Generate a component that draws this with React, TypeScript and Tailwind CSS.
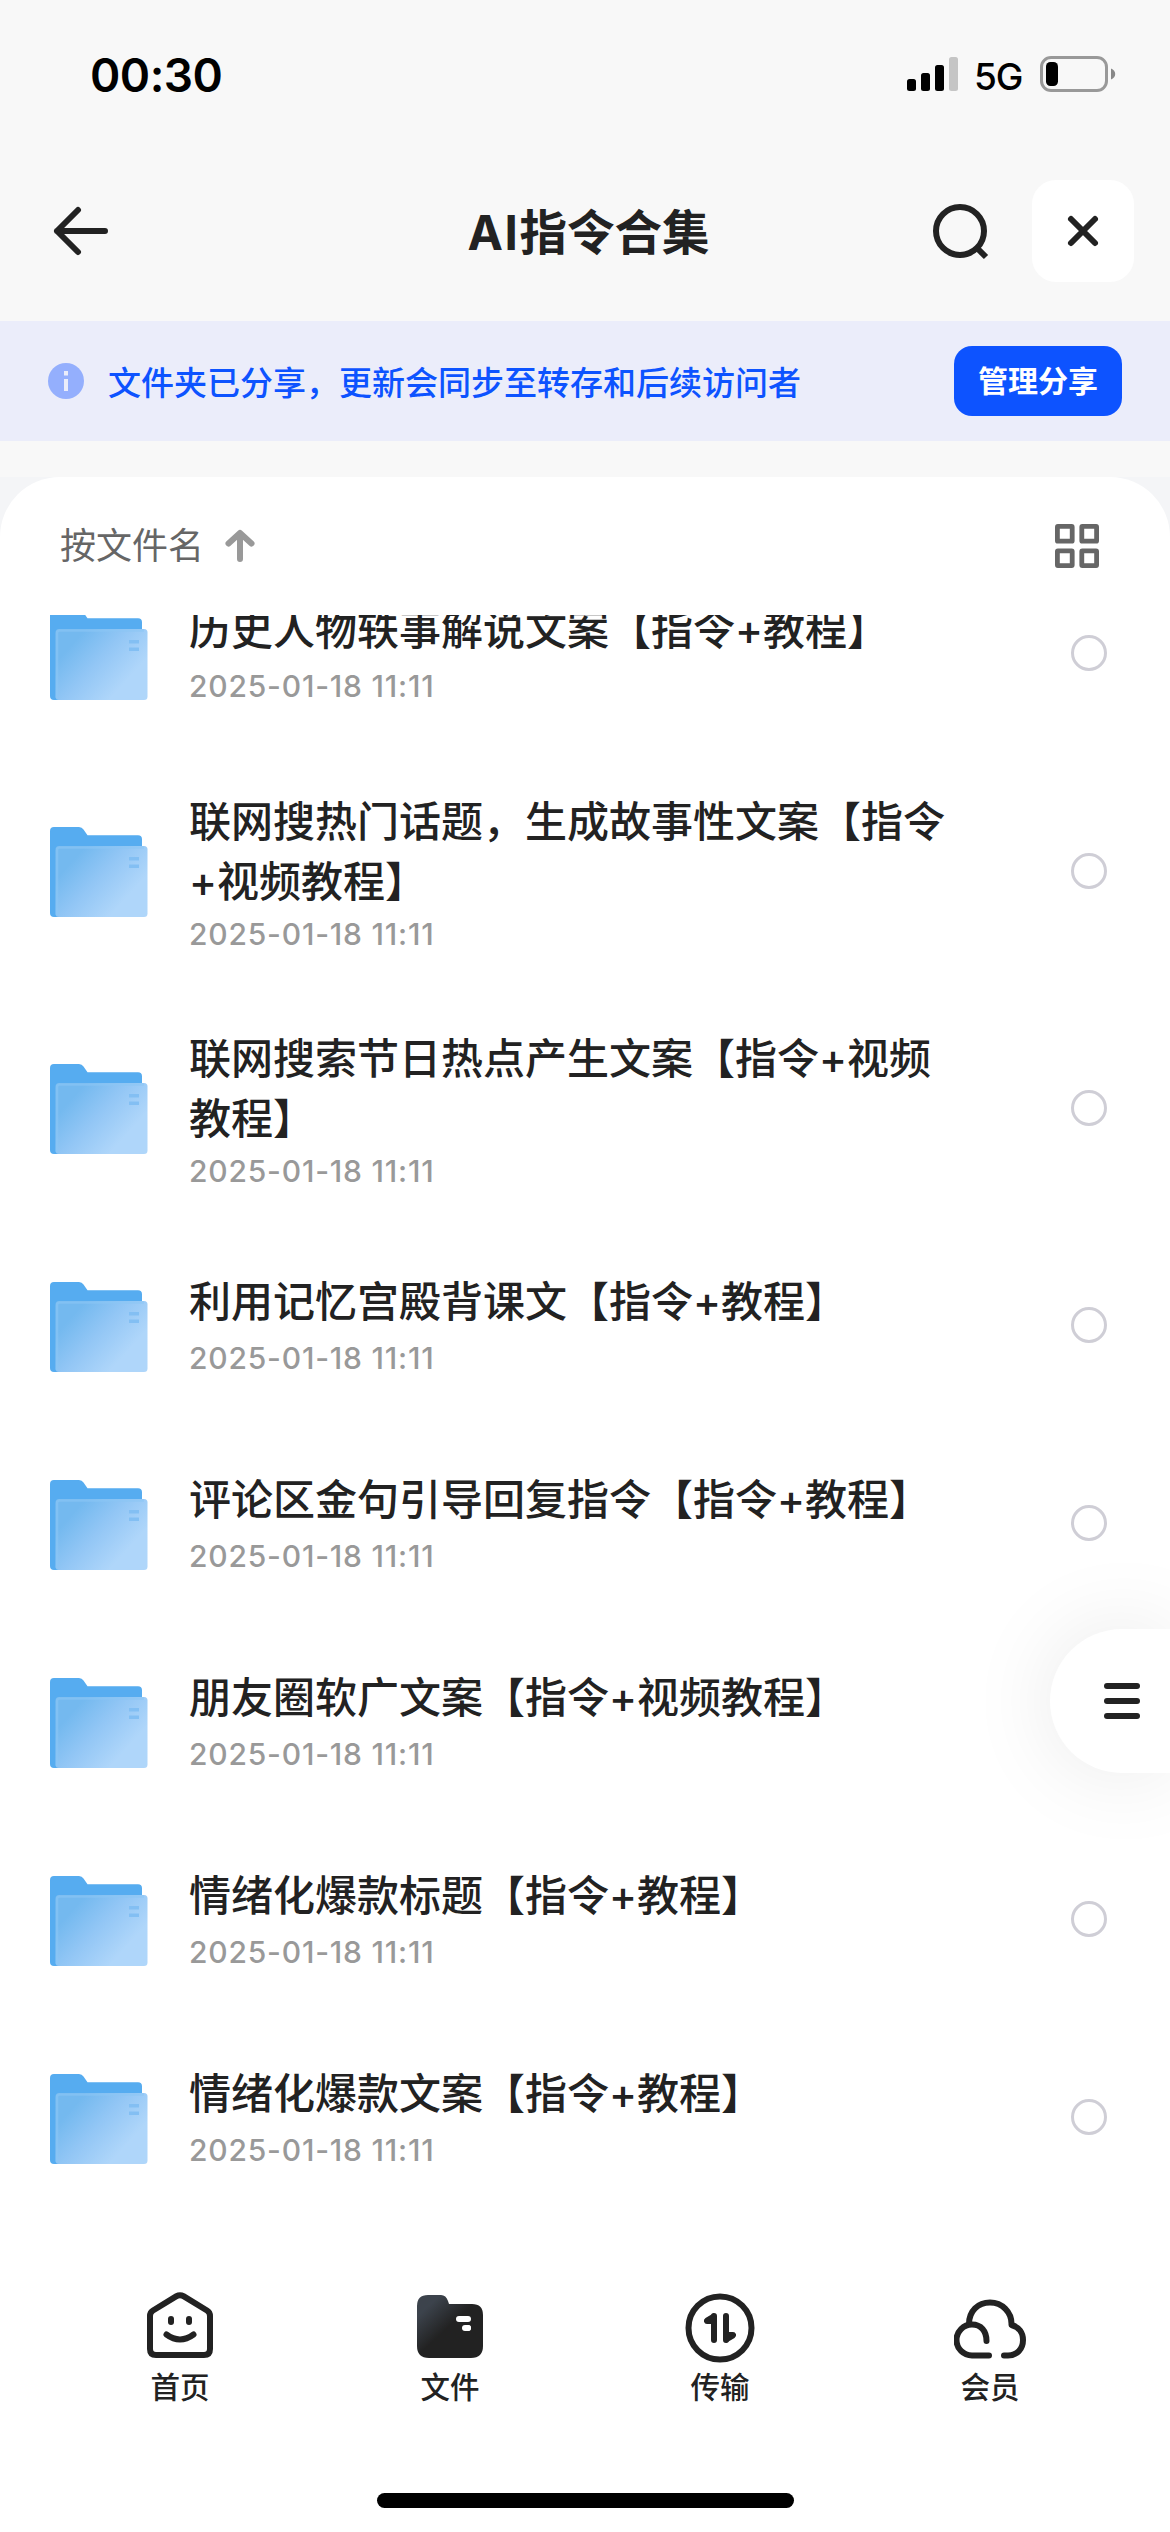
import type { ReactNode } from "react";

type FileItem = {
    name: string;
    date: string;
    long?: boolean;
};

const files: FileItem[] = [
    { name: "历史人物轶事解说文案【指令+教程】", date: "2025-01-18 11:11" },
    { name: "联网搜热门话题，生成故事性文案【指令+视频教程】", date: "2025-01-18 11:11", long: true },
    { name: "联网搜索节日热点产生文案【指令+视频教程】", date: "2025-01-18 11:11", long: true },
    { name: "利用记忆宫殿背课文【指令+教程】", date: "2025-01-18 11:11" },
    { name: "评论区金句引导回复指令【指令+教程】", date: "2025-01-18 11:11" },
    { name: "朋友圈软广文案【指令+视频教程】", date: "2025-01-18 11:11" },
    { name: "情绪化爆款标题【指令+教程】", date: "2025-01-18 11:11" },
    { name: "情绪化爆款文案【指令+教程】", date: "2025-01-18 11:11" },
];

export default function App() {
    return (
        <div
            lang="zh-CN"
            className="relative w-[1170px] h-[2532px] flex flex-col overflow-hidden bg-[#f8f8f8] text-[#222] font-['Inter','Noto_Sans_CJK_SC',sans-serif]"
        >
            <StatusBar />
            <Header />
            <ShareBanner />

            {/* File list card */}
            <main className="mt-9 flex-1 min-h-0 bg-[#f4f5f7]">
                <div className="h-full flex flex-col rounded-t-[60px] bg-white">
                    <div className="h-[138px] shrink-0 flex items-center justify-between pl-[60px] pr-[71px]">
                        <button className="flex items-center gap-[21px] text-[36px] text-[#666]">
                            <span>按文件名</span>
                            <SortIcon />
                        </button>
                        <button aria-label="网格视图">
                            <GridIcon />
                        </button>
                    </div>
                    <div className="flex-1 min-h-0 overflow-hidden">
                        <ul className="-mt-[61px]">
                            {files.map((file) => (
                                <FileRow key={file.name} file={file} />
                            ))}
                        </ul>
                    </div>
                    <TabBar />
                </div>
            </main>

            {/* Floating menu */}
            <button
                aria-label="菜单"
                className="absolute right-0 top-[1629px] w-[120px] h-[144px] pl-[54px] flex flex-col justify-center gap-[9px] rounded-l-[72px] bg-white shadow-[0_0_90px_rgba(0,0,0,0.09)]"
            >
                <span className="w-9 h-1.5 rounded-full bg-[#222]" />
                <span className="w-9 h-1.5 rounded-full bg-[#222]" />
                <span className="w-9 h-1.5 rounded-full bg-[#222]" />
            </button>
        </div>
    );
}

function StatusBar() {
    return (
        <div className="h-[148px] shrink-0 flex items-center justify-between pl-[90px] pr-[54px] text-black">
            <span className="pt-0.5 text-[46px] font-semibold leading-none tracking-[-0.5px]">00:30</span>
            <div className="flex items-center">
                <svg width="52" height="36" viewBox="0 0 52 36">
                    <rect x="0" y="23" width="9" height="12" rx="2.5" />
                    <rect x="14" y="17" width="9" height="18" rx="2.5" />
                    <rect x="28" y="9" width="9" height="26" rx="2.5" />
                    <rect x="42" y="1" width="9" height="34" rx="2.5" fill="#c5c5c5" />
                </svg>
                <span className="ml-[15px] mt-1 w-[50px] text-[37px] font-medium leading-none tracking-[-1px]">5G</span>
                <svg className="ml-[16px]" width="76" height="36" viewBox="0 0 76 36">
                    <rect x="1.5" y="1.5" width="65" height="33" rx="9.5" fill="none" stroke="#999" strokeWidth="3" />
                    <rect x="6" y="6" width="12" height="24" rx="4.500" />
                    <path d="M71 12.500c2.700 1 4.200 3 4.200 5.500s-1.500 4.500-4.200 5.500z" fill="#888" />
                </svg>
            </div>
        </div>
    );
}

function Header() {
    return (
        <header className="h-[173px] shrink-0 flex items-start justify-between pt-8 pl-[51px] pr-9">
            <button aria-label="返回" className="w-[196px] h-[102px] flex items-center">
                <svg width="60" height="60" viewBox="0 0 60 60" fill="none" stroke="#222" strokeWidth="6" strokeLinecap="round" strokeLinejoin="round">
                    <path d="M54 30H6M27 9L6 30l21 21" />
                </svg>
            </button>
            <h1 className="h-[102px] pt-1 flex items-center text-[47.500px] font-bold">
                <span className="tracking-[1.5px]">AI</span>指令合集
            </h1>
            <div className="flex items-center gap-[42px]">
                <button aria-label="搜索">
                    <svg width="60" height="60" viewBox="0 0 60 60" fill="none" stroke="#222" strokeWidth="6">
                        <circle cx="30" cy="30" r="24" />
                        <path d="M46 46l10 10" />
                    </svg>
                </button>
                <button aria-label="关闭" className="w-[102px] h-[102px] flex items-center justify-center rounded-[24px] bg-white">
                    <svg width="36" height="36" viewBox="0 0 36 36" fill="none" stroke="#222" strokeWidth="6" strokeLinecap="round">
                        <path d="M6 6l24 24M30 6L6 30" />
                    </svg>
                </button>
            </div>
        </header>
    );
}

function ShareBanner() {
    return (
        <div className="h-[120px] shrink-0 flex items-center justify-between pl-12 pr-12 bg-[#ebedfa]">
            <div className="flex items-center gap-6">
                <svg width="36" height="36" viewBox="0 0 36 36">
                    <circle cx="18" cy="18" r="18" fill="#94affd" />
                    <path d="M16 8h4v4.500h-4zM16 16h4v12h-4z" fill="#ebedfa" />
                </svg>
                <p className="pt-[5px] text-[33px] font-medium text-[#0d53ff]">
                    文件夹已分享，更新会同步至转存和后续访问者
                </p>
            </div>
            <button className="w-[168px] h-[70px] flex items-center justify-center rounded-[18px] bg-[#0d53ff] text-[30px] font-bold text-white">
                管理分享
            </button>
        </div>
    );
}

function FileRow({ file }: { file: FileItem }) {
    return (
        <li className={`flex items-center pl-[50px] pr-[63px] ${file.long ? "h-[237px]" : "h-[198px]"}`}>
            <FolderIcon />
            <div className={`ml-[41px] w-[770px] flex flex-col ${file.long ? "gap-0.5 pt-1" : "gap-1.5"}`}>
                <p className="text-[42px] leading-[60px] font-medium">{file.name}</p>
                <p className="text-[30px] leading-[40px] font-medium tracking-[0.8px] text-[#999]">{file.date}</p>
            </div>
            <span className="ml-auto w-9 h-9 rounded-full border-3 border-[#cfced6]" />
        </li>
    );
}

function TabBar() {
    return (
        <nav className="h-[317px] shrink-0 flex flex-col items-center justify-between pt-[74px] pb-6 bg-white">
            <div className="w-full px-[45px] grid grid-cols-4">
                <TabItem label="首页">
                    <path d="M32.500 7.200q3.500-2 7 0L63 21.500q3 1.800 3 5.500V60q0 6-6 6H12q-6 0-6-6V27q0-3.700 3-5.500z" fill="none" stroke="#222" strokeWidth="6" />
                    <rect x="24" y="27" width="6" height="9" rx="3" />
                    <rect x="42" y="27" width="6" height="9" rx="3" />
                    <path d="M22.500 45.500q13.500 10 27 0" fill="none" stroke="#222" strokeWidth="6" strokeLinecap="round" />
                </TabItem>
                <TabItem label="文件">
                    <defs>
                        <linearGradient id="tab-folder" x1="8" y1="12" x2="36" y2="42" gradientUnits="userSpaceOnUse">
                            <stop offset=".2" stopColor="#3c434c" />
                            <stop offset=".9" stopColor="#222" />
                        </linearGradient>
                    </defs>
                    <path d="M3 17q0-11 11-11h13q5 0 7 6l1 3h23q11 0 11 11v31q0 12-12 12H15Q3 69 3 57z" fill="url(#tab-folder)" />
                    <rect x="42" y="27" width="15" height="6" rx="3" fill="#fff" />
                    <rect x="51" y="36" width="6" height="6" rx="3" fill="#fff" />
                    <rect x="48" y="36" width="9" height="6" rx="3" fill="#fff" />
                </TabItem>
                <TabItem label="传输">
                    <circle cx="36" cy="39" r="31.500" fill="none" stroke="#222" strokeWidth="6" />
                    <path d="M30 27v24M42 27v24" stroke="#222" strokeWidth="6" strokeLinecap="round" />
                    <path d="M30 24l-8.500 5q-2.200 1.500-1.500 3.700t3 2.300h7zM42 54l8.500-5q2.200-1.500 1.500-3.700t-3-2.300h-7z" />
                </TabItem>
                <TabItem label="会员">
                    <g fill="none" stroke="#222" strokeWidth="6" strokeLinecap="round" strokeLinejoin="round">
                        <path d="M35 66.500H18A15.500 15.500 0 1 1 18 35.500C27 35.500 32.500 42 32.500 52" />
                        <path d="M15 35C15 22 24 13.500 36 13.500S58 23 57.500 36C65 38 69 44 69 51C69 60 63 66.500 54 66.500H50" />
                    </g>
                </TabItem>
            </div>
            <div className="w-[417px] h-[15px] rounded-full bg-black" />
        </nav>
    );
}

function TabItem({ label, children }: { label: string; children: ReactNode }) {
    return (
        <button className="flex flex-col items-center">
            <svg width="72" height="78" viewBox="0 0 72 78" fill="#222">
                {children}
            </svg>
            <span className="text-[29.500px] leading-[40px] font-medium">{label}</span>
        </button>
    );
}

function FolderIcon() {
    return (
        <svg className="mt-[3px] shrink-0" width="98" height="90" viewBox="0 0 98 90">
            <defs>
                <linearGradient id="folder-front" x1="18" y1="26" x2="82" y2="84" gradientUnits="userSpaceOnUse">
                    <stop offset=".1" stopColor="#74b9ef" />
                    <stop offset=".45" stopColor="#92c6f5" />
                    <stop offset=".85" stopColor="#afd6fa" />
                </linearGradient>
            </defs>
            <path d="M0 4q0-4 4-4h25q3 0 4.500 2.500L37.500 8.300H88q4 0 4 4V60L10 90H4q-4 0-4-4z" fill="#56acf0" />
            <rect x="5.500" y="19" width="92" height="71" rx="3.500" fill="url(#folder-front)" />
            <path d="M7 88V23q0-2.500 2.500-2.500H94" fill="none" stroke="#8cc6f5" strokeWidth="2.500" opacity=".6" />
            <path d="M79 30h10v3.500H79zM79 37.500h10V41H79z" fill="#83bff3" />
        </svg>
    );
}

function SortIcon() {
    return (
        <svg width="30" height="34" viewBox="0 0 30 34" fill="none" stroke="#999" strokeWidth="6" strokeLinecap="round" strokeLinejoin="round">
            <path d="M15 30V5M3.500 14.500L15 4l11.500 10.500" />
        </svg>
    );
}

function GridIcon() {
    return (
        <svg width="44" height="44" viewBox="0 0 44 44" fill="none" stroke="#666" strokeWidth="4.800">
            <rect x="2.400" y="2.400" width="14.800" height="14.800" rx=".5" />
            <rect x="26.800" y="2.400" width="14.800" height="14.800" rx=".5" />
            <rect x="2.400" y="26.800" width="14.800" height="14.800" rx=".5" />
            <rect x="26.800" y="26.800" width="14.800" height="14.800" rx=".5" />
        </svg>
    );
}
